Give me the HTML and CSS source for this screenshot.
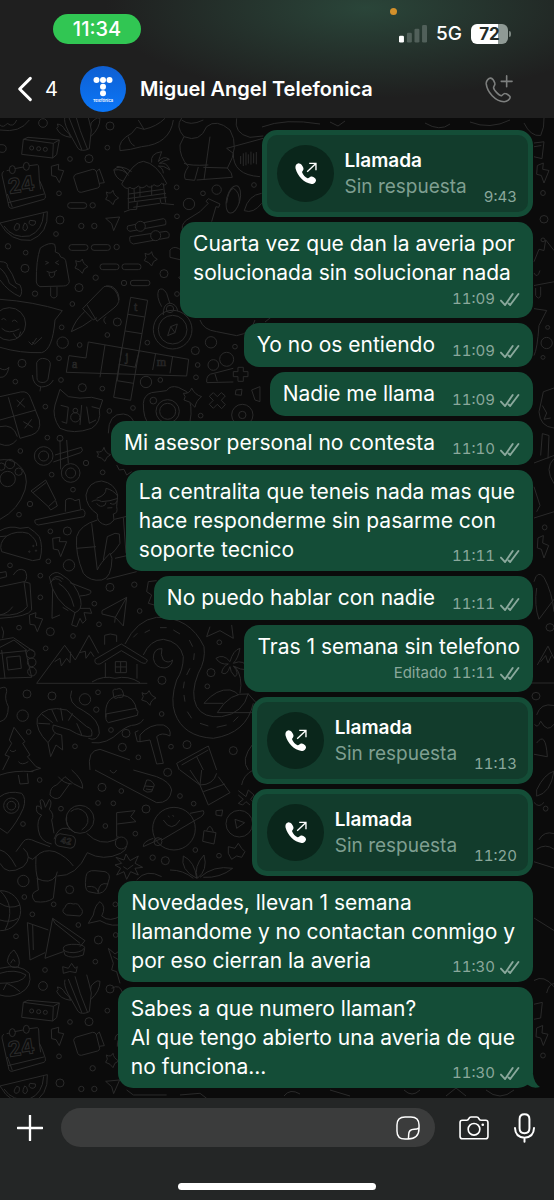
FILE: index.html
```html
<!DOCTYPE html>
<html lang="es">
<head>
<meta charset="utf-8">
<meta name="viewport" content="width=device-width, initial-scale=1">
<title>Miguel Angel Telefonica</title>
<link rel="stylesheet" href="styles.css">
</head>
<body>
<svg class="defs" width="0" height="0" aria-hidden="true">
  <symbol id="ticks" viewBox="739 523 63 45">
    <path d="M742 549L755 563L779 528M766 558L771 563L797 528" fill="none" stroke="currentColor" stroke-width="6" stroke-linecap="round" stroke-linejoin="round"/>
  </symbol>
  <symbol id="call-out" viewBox="116 124 80 80">
    <path fill="currentColor" d="M134 134C127 135 125 143 127 151C132 171 152 193 174 195C182 195 188 188 187 183C186 177 176 172 172 173C168 174 166 179 162 178C155 175 149 168 146 161C145 157 151 154 150 149C149 143 142 133 134 134Z"/>
    <path fill="none" stroke="currentColor" stroke-width="4" d="M161 159L186 135M167 134H187V154"/>
  </symbol>
</svg>

<div class="app">
  <header class="top">
    <div class="status">
      <span class="clock">11:34</span>
      <span class="dot"></span>
      <div class="indicators">
        <svg class="signal" viewBox="0 0 85 54" aria-hidden="true"><rect x="0" y="32" width="15" height="21" rx="4" fill="#fff"/><g fill="#51605a"><rect x="24" y="23" width="15" height="30" rx="4"/><rect x="47" y="11" width="15" height="42" rx="4"/><rect x="70" y="0" width="15" height="53" rx="4"/></g></svg>
        <span class="net">5G</span>
        <span class="battery">72</span>
      </div>
    </div>
    <nav class="bar">
      <button class="back" aria-label="Volver"><svg class="chev" viewBox="0 0 48 76" aria-hidden="true"><path d="M40 6L8 38L40 70" fill="none" stroke="#fff" stroke-width="9" stroke-linecap="round" stroke-linejoin="round"/></svg><span>4</span></button>
      <svg class="avatar" viewBox="0 0 46 46" role="img" aria-label="Telefónica">
        <defs><linearGradient id="av" x1="0" y1="0" x2="0" y2="1"><stop offset="0" stop-color="#0f5fd2"/><stop offset="1" stop-color="#0a76f8"/></linearGradient></defs>
        <circle cx="23" cy="23" r="23" fill="url(#av)"/>
        <g fill="#fff"><circle cx="16.500" cy="14" r="3"/><circle cx="23" cy="14" r="3"/><circle cx="29.500" cy="14" r="3"/><circle cx="23" cy="20.700" r="3"/><circle cx="23" cy="27.300" r="3"/></g>
        <text class="avatar-text" x="23" y="36" text-anchor="middle">Telefónica</text>
      </svg>
      <h1 class="name">Miguel Angel Telefonica</h1>
      <button class="call" aria-label="Llamar"><svg class="call-icon" viewBox="620 218 94 94" aria-hidden="true"><path fill="none" stroke="#7d7f7e" stroke-width="5" stroke-linejoin="round" stroke-linecap="round" d="M641 231C636 230 626 238 627 249C630 275 655 303 683 305C693 305 702 297 702 290C701 286 690 279 686 279C681 278 678 285 675 286C668 287 650 268 650 260C650 256 656 252 654 247C652 241 646 232 641 231ZM691 224V258M674 241H708"/></svg></button>
    </nav>
  </header>

  <main class="chat">
    <svg class="wallpaper" viewBox="0 0 554 980" preserveAspectRatio="xMinYMin slice" aria-hidden="true">
      <defs>
        <g id="calendar"><path d="M20 152L30 150M44 146L70 141M88 137L112 134Q116 135 116 141L118 180Q128 200 136 226Q138 236 132 238L36 265Q29 266 27 260L6 165Q5 156 12 154M22 222L37 262M24 248L132 222M118 180L122 208"/><ellipse cx="37" cy="149" rx="9" ry="12"/><ellipse cx="79" cy="139" rx="9" ry="12"/><text class="doodle-num" x="28" y="222" transform="rotate(-9 28 222)">24</text></g>
        <path id="bolt" d="M154 139L176 133L175 149L191 152L178 188L168 170L155 167Z"/>
        <g id="box"><path d="M70 58L160 70L178 60L84 52L70 58L65 103L158 114L160 70M158 114L170 104L178 60"/><circle cx="95" cy="84" r="6"/><circle cx="116" cy="86" r="6"/><circle cx="136" cy="88" r="6"/></g>
        <g id="camcorder"><path d="M230 162L278 148Q286 147 289 155L299 196Q299 202 293 204L244 217Q236 218 233 211L221 172Q221 165 230 162ZM288 156L298 147L313 188L298 190"/></g>
        <g id="melon"><path d="M0 309L142 275Q146 340 92 361Q30 366 0 309ZM12 318Q38 357 88 348Q128 332 131 280M50 310Q36 328 48 331Q60 331 58 313ZM74 309Q62 332 77 332Q87 325 80 313ZM90 301Q82 312 96 316Q109 316 106 303Z"/></g>
        <path id="spark" d="M319 216Q333 224 339 211Q341 226 356 234Q342 238 339 254Q332 242 317 238Q326 230 319 216Z"/>
        <path id="dart" d="M317 295L359 291L341 332L335 311Z"/>
        <g id="cactus"><path d="M195 -10Q190 5 205 34L234 85Q245 97 268 86L274 30Q270 10 260 -25M205 -12L246 90M225 -20Q238 30 263 89M170 25Q178 20 172 12M172 12Q188 14 195 30Q210 40 212 52Q180 48 170 25M272 50Q300 25 300 -5Q292 -10 282 0Q270 8 272 20"/></g>
      </defs>
      <g class="ink">
        <g transform="translate(0 2) scale(.3333)">
          <use href="#calendar"/><use href="#bolt"/><use href="#box"/><use href="#camcorder"/><use href="#melon"/><use href="#spark"/><use href="#dart"/><use href="#cactus"/>
          <path d="M0 30Q60 40 88 0M0 15Q10 25 22 10Q40 25 50 0M0 74Q22 72 18 90Q14 100 0 96"/>
          <path d="M360 92Q352 62 395 40L410 22L432 28L415 0M385 50Q390 72 404 78M360 92Q390 90 425 80Q510 72 520 0M432 28Q470 20 495 -5"/>
          <path d="M552 50Q525 20 545 -6M552 50Q600 70 620 20Q650 -5 690 30Q720 80 682 145M552 50L540 75Q538 110 565 140Q548 165 556 178L584 181L595 141M630 50L612 180M552 130Q570 138 625 135M610 142L682 144Q698 160 697 172L590 180M545 0Q570 20 610 0"/>
          <path d="M710 -5Q700 40 750 52L790 48M680 85L790 55M680 85L700 100Q698 165 780 170M722 108V132M730 100V138M738 97V136M745 103V131M753 95V134M761 100V130M769 96V133"/>
          <path d="M365 192Q400 125 430 124Q470 130 500 190Q495 200 485 190Q475 205 462 194Q450 208 440 196Q425 210 415 198Q400 212 390 202Q378 212 365 192ZM385 205V268M402 205L404 244M490 190L497 248M383 236L498 220M387 247L500 232M372 276Q390 266 410 268L412 247M480 235L483 250Q500 252 522 254M400 262L480 250M386 222L490 208M420 200V230M455 196V225M370 184Q345 175 342 150Q370 145 385 166Q365 135 350 140M340 150Q360 130 395 155M455 128Q450 100 485 95Q480 110 475 125Q490 105 508 118Q490 122 478 130Q500 125 510 150Q490 135 475 138Q490 145 490 160"/>
          <path d="M383 318L490 296Q500 298 497 314L390 334Q378 330 383 318ZM390 350L498 334Q512 338 506 353L400 372Q386 368 390 350Z"/><circle class="cut" cx="421" cy="319" r="15"/><circle class="cut" cx="467" cy="347" r="15"/>
          <rect x="203" y="248" width="57" height="17" rx="8"/><rect x="207" y="374" width="57" height="17" rx="8"/><rect x="274" y="374" width="57" height="17" rx="8"/><rect x="300" y="432" width="57" height="17" rx="8"/><rect x="366" y="432" width="57" height="17" rx="8"/><rect x="391" y="481" width="59" height="16" rx="8"/>
          <path d="M121 384Q148 365 164 373Q168 385 166 396Q180 398 182 411Q196 414 197 422L208 485Q205 498 190 498L120 500Q110 496 109 486Q108 420 121 384ZM152 502V528Q162 540 171 528V500M136 424L146 428L136 433M176 422L166 428L177 434M140 454Q156 462 171 451M147 457Q148 474 156 472Q165 470 164 455"/>
          <use href="#spark" transform="translate(-92 206)"/><use href="#spark" transform="translate(116 184)"/>
          <path d="M0 425Q25 425 22 440Q38 460 48 490L60 495Q70 515 60 530Q25 515 0 480M0 445Q20 460 28 490L50 505"/>
          <path d="M0 538Q100 545 187 572L165 600Q158 690 125 698Q60 700 0 682M86 665L96 675L110 654M96 667L104 672L126 652"/><circle cx="28" cy="612" r="49"/><path d="M5 600Q10 590 18 601M36 605Q44 595 52 607M5 625Q25 645 58 627M40 640Q55 670 62 635"/>
          <path d="M260 553L312 500Q340 490 354 520Q364 548 342 564L291 604ZM318 498Q350 500 357 540M260 553L248 566L280 600L291 593M254 575Q225 600 214 635Q250 620 275 600M318 590Q305 600 318 612"/>
          <path d="M392 532L443 541L392 841L341 832ZM384 583L434 591M375 633L426 641M265 666L566 718L560 768L199 757L207 707L258 714ZM315 675L300 772M365 683L352 780M418 692L405 742M467 700L458 750M518 709L510 760M350 782L400 790M356 733L407 742"/>
          <text class="doodle-letter" x="402" y="574">t</text><text class="doodle-letter" x="216" y="744">a</text><text class="doodle-letter" x="376" y="724">j</text><text class="doodle-letter" x="470" y="738">m</text>
          <circle cx="518" cy="629" r="58"/><circle cx="518" cy="629" r="43"/><circle cx="510" cy="567" r="11"/><path d="M490 585Q488 555 508 549Q530 552 533 573M485 560Q468 530 476 510Q488 500 500 520L510 552M503 647L512 620L532 612L525 638ZM512 620L525 638"/>
          <path d="M600 600Q610 630 650 635L710 647Q755 640 765 600"/>
          <circle cx="640" cy="735" r="16"/><circle cx="680" cy="718" r="21"/><path d="M620 786Q618 762 642 760L700 745M620 788L700 786M645 762L652 784M714 742H730V755H744V770H730V784H714V770H700V755H714Z"/>
          <path d="M110 728Q118 712 135 716Q152 720 151 735L144 778Q138 790 122 787Q110 784 111 772ZM97 765Q100 798 125 801Q150 800 160 780M122 801L120 814"/>
          <path d="M0 745Q15 755 27 742Q20 775 0 772M0 830L62 816Q85 812 92 835L118 900Q125 935 95 945L60 955M25 832L60 955M0 900L108 870M50 840L75 862M52 860L72 835M70 905L98 922M74 925L95 898M0 920Q40 910 52 950"/>
          <path d="M180 808L205 830Q240 838 275 832L308 840L298 870Q305 905 275 925Q220 945 180 925Q155 890 165 855ZM182 856L205 862L200 910L185 905M245 855L240 915M260 860L268 910L288 900M275 860L298 866"/><circle cx="226" cy="892" r="14"/><circle cx="226" cy="872" r="7"/>
          <path d="M430 850Q432 825 455 818L500 812Q510 795 535 802L560 815Q580 860 570 905M430 850Q430 900 448 910"/><circle cx="503" cy="874" r="35"/><circle cx="503" cy="874" r="24"/><circle cx="460" cy="842" r="10"/>
          <path class="cut" d="M550 820Q570 822 575 804Q585 825 605 830Q588 842 585 862Q570 842 552 840Q560 830 550 820Z"/>
          <path d="M640 818L652 830L664 818L676 828L664 841L676 854L665 866L652 853L640 865L628 853L640 841L628 829Z"/><circle cx="727" cy="885" r="32"/><circle cx="727" cy="885" r="11"/><path d="M325 940Q325 880 370 882Q400 885 405 920M708 810L726 808L724 826L706 824ZM755 810L780 800V845L765 840Z"/>
          <ellipse cx="700" cy="238" rx="20" ry="42" transform="rotate(14 700 238)"/><path d="M680 250Q685 210 700 205Q720 215 718 250M733 272Q745 225 785 220M733 272Q760 282 785 250M550 335Q540 315 560 300L600 275L625 250L618 244L625 236L660 252L656 262L648 260L635 305M510 390Q520 378 535 385L552 395M510 412L552 422M510 390V412M536 472L552 466M536 472L555 495"/>
          <g id="bubbles"><circle cx="129" cy="9" r="13"/><circle cx="330" cy="18" r="12"/><circle cx="322" cy="83" r="7"/><circle cx="210" cy="117" r="7"/><circle cx="267" cy="116" r="12"/><circle cx="177" cy="220" r="7"/><circle cx="278" cy="256" r="8"/><circle cx="180" cy="300" r="12"/><circle cx="244" cy="318" r="8"/><circle cx="283" cy="318" r="8"/></g>
          <circle cx="168" cy="342" r="7"/><circle cx="24" cy="379" r="8"/><circle cx="77" cy="398" r="7"/><circle cx="75" cy="445" r="12"/><circle cx="350" cy="381" r="8"/><circle cx="287" cy="473" r="8"/><circle cx="237" cy="503" r="12"/><circle cx="105" cy="521" r="8"/><circle cx="372" cy="489" r="8"/><circle cx="492" cy="461" r="12"/><circle cx="531" cy="522" r="7"/><circle cx="217" cy="552" r="7"/><circle cx="352" cy="606" r="12"/><circle cx="185" cy="622" r="7"/><circle cx="322" cy="645" r="7"/><circle cx="188" cy="668" r="17"/><circle cx="239" cy="675" r="7"/><circle cx="442" cy="668" r="7"/><circle cx="66" cy="730" r="12"/><circle cx="177" cy="715" r="7"/><circle cx="46" cy="785" r="7"/><circle cx="183" cy="780" r="7"/><circle cx="247" cy="803" r="12"/><circle cx="307" cy="806" r="7"/><circle cx="438" cy="786" r="17"/><circle cx="481" cy="780" r="7"/><circle cx="593" cy="735" r="7"/><circle cx="588" cy="772" r="7"/><circle cx="586" cy="692" r="12"/><circle cx="633" cy="667" r="17"/><circle cx="705" cy="680" r="7"/><circle cx="136" cy="860" r="7"/><circle cx="328" cy="873" r="7"/><circle cx="399" cy="864" r="7"/><circle cx="602" cy="887" r="7"/><circle cx="567" cy="252" r="17"/><circle cx="530" cy="202" r="7"/><circle cx="609" cy="220" r="7"/><circle cx="650" cy="209" r="14"/><circle cx="762" cy="195" r="7"/><circle cx="531" cy="289" r="7"/><circle cx="180" cy="955" r="9"/><circle cx="142" cy="953" r="7"/>
        </g>
        <g transform="translate(0 322) scale(.3333)">
          <circle cx="131" cy="48" r="28"/><circle cx="131" cy="48" r="15"/><circle cx="212" cy="99" r="28"/><circle cx="212" cy="99" r="15"/><path d="M165 45L244 22Q252 32 242 38L160 66M180 0L182 88M200 0L205 70M0 12Q30 25 50 0M290 35Q307 40 312 22Q316 40 332 44Q318 50 315 64Q305 52 292 50Q300 42 290 35ZM345 60L360 68L375 60M350 75L358 90L372 88L380 105L395 95"/>
          <path d="M0 60Q25 55 50 70Q90 100 75 150Q55 210 0 238"/><circle cx="23" cy="117" r="23"/><circle cx="30" cy="72" r="14"/><circle cx="56" cy="95" r="11"/><circle cx="4" cy="80" r="11"/>
          <path d="M93 153L137 120L167 180L145 200ZM99 158L138 128M145 200L152 210L172 198L167 182M105 240L248 208Q260 215 252 230L115 255Q102 252 105 240ZM196 215L197 180Q210 170 225 182L238 178L242 208"/>
          <path d="M0 272Q30 255 60 265L85 262Q105 275 118 290Q130 320 120 358L98 362L5 335Q-5 310 20 288Q50 270 85 280Q112 300 110 318M0 290L20 288"/><circle cx="88" cy="335" r="2"/><circle cx="100" cy="318" r="2"/><circle cx="108" cy="332" r="2"/>
          <path d="M292 222Q258 200 258 165Q265 125 305 123Q345 130 353 165L350 200Q355 220 340 222L342 240Q330 255 318 255Q295 250 292 232ZM275 185Q290 175 305 185L330 182L354 175M290 190Q300 205 315 195L318 187M330 190Q345 198 352 182M290 175Q320 165 318 145Q340 150 353 168M322 204L337 203M292 240Q240 255 230 290Q225 340 250 400Q270 425 305 420Q335 415 336 355L330 340Q300 370 292 390L275 250M310 360L322 290L345 280L358 282L360 310Q345 335 330 345M343 238L385 228L390 345L345 355M370 232L378 340M230 325L288 320M320 418L410 395M385 140Q375 160 385 200"/>
          <path d="M158 295L180 292L178 305L200 305L182 350L175 330L160 327ZM88 525L108 518L106 532L128 537L112 575L104 555L90 553Z"/>
          <path d="M148 410Q165 390 182 402Q230 430 242 480Q248 510 225 518Q160 485 148 410ZM150 430Q165 405 185 425M155 420Q170 400 190 418M210 428L272 452Q280 465 240 468M158 445L156 535L180 525M188 502L205 512M225 518L215 555L230 560L240 535L248 550L258 540L252 518L275 520L270 505L240 505M176 430Q210 450 222 500M306 512L380 472L370 558L346 532L306 522ZM380 472L346 532L344 548"/>
          <path d="M0 440L72 425L82 500Q60 530 0 525M72 425L90 430L95 510Q85 530 0 535M40 405Q55 380 75 392Q85 410 75 425M0 398L18 395L20 410L0 415M0 525Q25 520 38 500"/>
          <path d="M0 600L40 593L102 635M0 640L80 632M0 622L42 600L82 632M20 652L60 648L64 685L24 690ZM5 630L15 715M76 630L95 712M0 715L95 712M5 560Q15 575 8 595"/><circle cx="92" cy="642" r="13"/><circle cx="95" cy="667" r="13"/><circle cx="96" cy="695" r="13"/>
          <path d="M110 730L194 616L226 660L267 586L296 640M164 665L180 655L184 678L200 655L210 668L212 635M238 638L256 634L258 655L272 635L282 650M110 730H442M316 668V712M411 672V716M346 665H379V698H346ZM362 665V698M346 681H379M276 726Q310 705 345 715Q385 705 420 728M314 614V586Q330 578 350 586V606M285 658L364 612L442 660Q440 675 425 668L364 632L300 672Q282 675 285 658Z"/>
          <path d="M375 612Q410 540 470 532Q570 530 612 620Q618 660 595 700Q570 760 590 800Q610 835 665 830Q730 820 745 760M430 645Q450 600 490 598Q540 605 550 650Q550 690 530 720Q510 780 525 820Q550 890 640 895Q740 880 760 790"/>
          <path d="M400 592L412 580M434 578L450 570M480 563H500M520 570L540 582M568 600L578 620M583 640L581 660M570 685L560 705M553 725L550 745M552 765L555 785M562 815L575 835M600 850L625 858M650 862L680 855M700 845L715 830"/>
          <path d="M486 626Q460 625 460 655Q465 685 495 684Q515 680 518 660Q505 672 490 660Q480 645 486 626ZM426 758Q440 768 447 752Q452 768 468 774Q452 780 450 796Q442 782 425 780Q434 770 426 758Z"/>
          <path d="M318 832Q310 770 365 765Q405 770 410 812M318 822L408 805Q418 815 412 826L325 848Q315 842 318 822ZM340 762Q335 745 350 748Q365 740 370 760Q375 775 355 772Q340 782 340 762Z"/>
          <path d="M152 950L144 908L165 880M185 885L188 930L168 915L152 950M144 908Q105 870 112 835Q135 795 200 810L260 860Q280 865 275 888Q250 895 210 870L160 855Q150 880 185 885M115 850L150 852M125 822L158 848M155 808L172 845M182 804L188 842M218 820L205 842M230 850Q240 870 245 885M215 752Q200 790 250 812Q300 840 298 880Q290 905 265 895M275 908Q320 915 360 875Q385 855 405 855Q425 850 430 838"/>
          <path d="M8 990L28 950L15 945L35 910L28 900L42 862L75 905L68 910L90 945L82 950L108 980L122 985L90 995M0 745Q22 735 20 755Q12 775 25 800Q25 840 0 845M30 930Q38 940 48 930M55 965Q65 978 85 965"/>
          <path d="M420 885Q450 850 490 855Q515 865 510 888Q485 875 470 890L490 970L470 972L450 900L420 905ZM415 872L405 877L412 905L424 905M530 970L625 918L650 990M530 970L538 990M545 975L625 930M590 950L610 990M270 990Q260 930 300 928L390 960M745 990Q720 960 760 910"/>
          <path d="M620 590L630 560M620 590L660 572L700 595L695 555M648 655Q670 640 690 665Q700 630 720 625Q715 655 700 670Q735 655 745 690Q720 690 700 678Q720 700 705 710Q690 695 690 680Q680 710 665 698Q668 680 685 672Q660 675 648 655ZM705 680Q730 710 720 760M612 790Q650 745 690 750Q710 755 715 765M612 790H670M652 818Q690 755 745 762L770 790M652 818H770M445 425L470 422M445 425L440 455L455 465L445 490L480 500"/>
          <circle cx="61" cy="33" r="7"/><circle cx="155" cy="104" r="7"/><circle cx="258" cy="69" r="8"/><circle cx="308" cy="97" r="7"/><circle cx="219" cy="149" r="7"/><circle cx="90" cy="192" r="8"/><circle cx="57" cy="224" r="7"/><circle cx="151" cy="274" r="7"/><circle cx="202" cy="273" r="12"/><circle cx="145" cy="364" r="7"/><circle cx="207" cy="376" r="17"/><circle cx="30" cy="376" r="7"/><circle cx="121" cy="407" r="7"/><circle cx="330" cy="442" r="12"/><circle cx="403" cy="434" r="8"/><circle cx="121" cy="472" r="7"/><circle cx="283" cy="491" r="7"/><circle cx="419" cy="513" r="7"/><circle cx="57" cy="563" r="7"/><circle cx="151" cy="575" r="12"/><circle cx="297" cy="553" r="7"/><circle cx="219" cy="588" r="7"/><circle cx="137" cy="625" r="7"/><circle cx="486" cy="721" r="12"/><circle cx="294" cy="757" r="7"/><circle cx="81" cy="762" r="12"/><circle cx="156" cy="768" r="12"/><circle cx="255" cy="778" r="17"/><circle cx="289" cy="809" r="8"/><circle cx="68" cy="827" r="17"/><circle cx="485" cy="822" r="7"/><circle cx="86" cy="876" r="7"/><circle cx="333" cy="870" r="7"/><circle cx="378" cy="880" r="12"/><circle cx="367" cy="922" r="12"/><circle cx="225" cy="919" r="7"/><circle cx="415" cy="952" r="7"/><circle cx="513" cy="920" r="7"/><circle cx="561" cy="914" r="12"/><circle cx="700" cy="932" r="12"/><circle cx="658" cy="607" r="7"/><circle cx="633" cy="698" r="12"/><circle cx="622" cy="739" r="7"/>
        </g>
        <g transform="translate(0 652) scale(.3333)">
          <path d="M55 15L60 42L85 40L82 10M0 15Q40 0 100 5M215 0Q250 30 248 55Q220 45 195 20L170 45Q150 50 150 75Q165 92 180 82L210 40M175 20Q190 40 215 42M285 0L470 98Q510 100 515 60Q510 35 470 20L400 0M440 30Q455 28 463 45L455 65Q440 70 430 60ZM435 48L460 50M438 57L457 60M330 0Q340 18 350 0"/>
          <path d="M540 0L600 45Q640 45 650 10M570 0L600 45L605 0M600 45L625 105L690 68L655 20M610 65L675 42M715 62L738 80L745 60L762 75L752 88L765 102M715 75L730 88L715 100L728 105L738 95L750 105M725 45Q730 15 760 0"/>
          <path d="M0 80Q25 60 65 70Q80 85 70 115Q50 160 22 190L0 175"/><circle cx="34" cy="107" r="23"/><circle cx="34" cy="107" r="13"/>
          <circle cx="240" cy="148" r="42"/><path d="M212 125Q235 105 258 130Q275 160 245 180M200 140Q195 170 225 188M115 180Q110 150 125 135Q105 130 110 108Q120 105 125 118L120 92Q130 80 136 112L148 88Q158 95 148 118Q165 135 155 150L162 190M115 180Q120 215 155 222M162 208Q175 170 200 175L215 180M150 230L108 215Q80 200 70 215L48 245M70 235Q100 260 70 290Q20 320 0 280M85 262L98 268L108 260M0 240Q25 245 48 290M108 260Q130 235 165 245Q200 260 220 288M108 260Q105 310 115 330M110 325Q150 345 168 318L172 305M168 318L160 385Q140 400 105 395Q85 370 115 360L112 325M172 318Q230 320 262 248Q310 275 362 250Q380 240 380 228M260 190Q300 230 345 210L355 198M350 128V200M350 128L405 122L392 140L408 155L352 162"/><circle cx="364" cy="219" r="18"/><rect x="166" y="194" width="60" height="38" rx="15" transform="rotate(10 196 213)"/><text class="doodle-small" x="180" y="218" transform="rotate(12 180 218)">42</text>
          <circle cx="522" cy="176" r="64"/><path d="M485 205L430 230Q428 215 460 205M570 130L610 122Q618 135 590 148L485 210M490 150Q515 190 540 150M505 137L508 142M518 135L521 140"/><circle cx="474" cy="215" r="12"/>
          <circle cx="718" cy="161" r="40"/><path d="M705 148L734 158L710 175ZM648 122L668 120L665 138L648 135ZM612 182L648 188L642 222L608 214ZM620 182Q630 155 640 185M685 230L705 235L715 220L725 235L735 245L725 262L710 258L695 268L685 250Z"/>
          <path d="M348 262L372 270L378 252L390 272L415 258L405 280L428 292L405 295L415 315L392 305L380 328L372 305L350 315L362 295L345 285L365 280ZM370 290L382 298L400 285"/>
          <path d="M258 320Q260 300 285 302L315 305Q330 310 328 325L320 352Q310 372 290 370L265 365Q252 358 258 320ZM262 350Q290 345 295 368M295 368Q295 335 325 342M510 300Q550 300 580 325M550 258Q540 300 590 325Q585 275 550 258ZM612 255Q580 290 592 325Q625 300 612 255ZM600 322Q640 285 698 295Q660 325 610 322M410 330Q440 295 485 320"/>
          <circle cx="2" cy="422" r="60"/><path d="M0 362Q50 410 15 480M0 400Q30 420 60 405M0 450Q30 460 55 445"/>
          <path d="M200 435Q180 425 195 412Q200 395 220 402Q235 398 240 412Q255 425 240 438ZM265 460L280 435Q285 405 300 395Q320 410 305 438Q330 460 365 435M265 460L300 452Q340 475 370 460"/>
          <path d="M90 570L82 458L145 480M90 570L135 548M98 465L100 540M135 565L158 445L255 512L240 530M135 565L190 545M158 445L165 460L240 520M190 535Q190 525 215 523Q250 522 254 532Q250 545 222 548Q190 548 190 535ZM190 538L195 555Q215 568 250 555L254 535"/>
          <path d="M22 575Q25 550 42 540Q65 570 55 590Q35 600 22 575ZM32 580Q40 560 45 575M0 595Q60 580 88 610Q98 650 60 670Q30 685 0 675M0 610Q45 595 78 615Q70 640 0 640M10 660L20 640L40 650L60 665M325 535L345 552L362 540M325 535L340 580L335 600L350 605L360 640M340 560L365 575M335 655Q360 640 368 670M365 790Q345 790 345 810M370 795Q350 805 352 830"/>
          <use href="#calendar" transform="translate(0 639)"/><use href="#bolt" transform="translate(0 639)"/><use href="#box" transform="translate(0 639)"/><use href="#camcorder" transform="translate(0 639)"/><use href="#melon" transform="translate(0 639)"/><use href="#spark" transform="translate(0 639)"/><use href="#dart" transform="translate(0 639)"/><use href="#cactus" transform="translate(0 639)"/><use href="#bubbles" transform="translate(0 639)"/>
          <path d="M190 610L188 590L205 595L215 580L225 595L232 590L228 608Q210 600 190 610ZM380 960L400 975H500M540 975L600 970L620 985"/>
          <circle cx="306" cy="52" r="12"/><circle cx="364" cy="63" r="7"/><circle cx="119" cy="30" r="7"/><circle cx="503" cy="7" r="12"/><circle cx="294" cy="99" r="7"/><circle cx="340" cy="100" r="7"/><circle cx="183" cy="116" r="7"/><circle cx="438" cy="117" r="12"/><circle cx="540" cy="78" r="7"/><circle cx="581" cy="101" r="7"/><circle cx="316" cy="168" r="7"/><circle cx="69" cy="162" r="7"/><circle cx="406" cy="191" r="7"/><circle cx="586" cy="240" r="7"/><circle cx="458" cy="263" r="8"/><circle cx="496" cy="272" r="12"/><circle cx="657" cy="257" r="7"/><circle cx="70" cy="333" r="17"/><circle cx="209" cy="359" r="12"/><circle cx="73" cy="381" r="7"/><circle cx="161" cy="403" r="7"/><circle cx="97" cy="433" r="7"/><circle cx="346" cy="403" r="7"/><circle cx="235" cy="465" r="7"/><circle cx="347" cy="495" r="7"/><circle cx="295" cy="510" r="12"/><circle cx="48" cy="499" r="7"/><circle cx="286" cy="575" r="7"/><circle cx="135" cy="600" r="7"/>
        </g>
        <g class="edge" transform="translate(524 0) scale(.3333 .625)">
          <path d="M0 8Q20 30 50 28Q62 15 60 0M30 40L60 38L54 65L30 62M30 46L52 44M40 76L58 72L56 82L75 84L60 104L52 92L38 90ZM30 230L45 210L60 212L65 195L90 212M30 248Q40 258 48 244M90 262L30 268M35 272V284Q45 292 50 284V270M30 305L68 308L45 332Q40 370 30 380M90 432L58 438L45 470Q48 494 90 496M55 460L68 472L60 482L80 480M50 540L55 505L75 508L72 545M30 552L90 540M90 545Q60 560 90 585M30 640L90 630M30 590L48 620L38 630M42 672L58 668L56 680L74 684L60 704L52 690L40 688ZM30 742Q40 722 60 735Q85 760 90 790M38 752Q30 780 45 802L90 770M40 875L72 845L90 865M50 870L65 860L72 872L82 860M0 904H90M38 955Q50 935 90 940M32 970Q40 978 50 965Q70 985 90 970M38 1000Q65 980 70 1022L30 1018M38 1075Q60 1050 90 1045Q80 1080 38 1085ZM30 1095Q45 1105 60 1095M45 1155Q60 1140 90 1145M30 1190L90 1200M38 1170Q65 1160 90 1170M30 1280L90 1300M30 1380Q60 1370 90 1390M30 1418L55 1415L50 1440L30 1442M38 1456L56 1452L54 1464L72 1466L58 1484L50 1472L36 1470ZM68 1400Q75 1385 90 1385"/>
          <ellipse cx="57" cy="120" rx="7" ry="4"/><ellipse cx="60" cy="162" rx="12" ry="6"/><ellipse cx="57" cy="195" rx="6" ry="3"/><ellipse cx="68" cy="360" rx="17" ry="9"/><ellipse cx="71" cy="335" rx="6" ry="3"/><ellipse cx="57" cy="383" rx="6" ry="3"/><ellipse cx="62" cy="655" rx="7" ry="4"/><ellipse cx="36" cy="925" rx="12" ry="6"/><ellipse cx="65" cy="1105" rx="7" ry="4"/><ellipse cx="57" cy="1500" rx="7" ry="4"/><ellipse cx="78" cy="815" rx="12" ry="6"/>
        </g>
        <path d="M262 9Q285 0 320 6M330 4L338 8L345 3M425 5Q440 14 450 6M470 4Q490 12 510 2M265 204L275 196M284 978Q290 970 300 976M330 972L350 978M404 972Q412 980 420 972M446 978L456 970L466 978M486 972Q500 984 514 972"/>
      </g>
    </svg>

    <article class="bubble card"><span class="disc"><svg viewBox="0 0 27 27"><use href="#call-out"/></svg></span><div class="info"><strong>Llamada</strong><span>Sin respuesta</span></div><time class="meta">9:43</time></article>
    <article class="bubble stack"><p>Cuarta vez que dan la averia por<br>solucionada sin solucionar nada</p><span class="meta"><time>11:09</time><svg class="ticks"><use href="#ticks"/></svg></span></article>
    <article class="bubble line"><p>Yo no os entiendo</p><span class="meta"><time>11:09</time><svg class="ticks"><use href="#ticks"/></svg></span></article>
    <article class="bubble line"><p>Nadie me llama</p><span class="meta"><time>11:09</time><svg class="ticks"><use href="#ticks"/></svg></span></article>
    <article class="bubble line"><p>Mi asesor personal no contesta</p><span class="meta"><time>11:10</time><svg class="ticks"><use href="#ticks"/></svg></span></article>
    <article class="bubble block"><p>La centralita que teneis nada mas que<br>hace responderme sin pasarme con<br>soporte tecnico</p><span class="meta"><time>11:11</time><svg class="ticks"><use href="#ticks"/></svg></span></article>
    <article class="bubble line"><p>No puedo hablar con nadie</p><span class="meta"><time>11:11</time><svg class="ticks"><use href="#ticks"/></svg></span></article>
    <article class="bubble stack snug"><p>Tras 1 semana sin telefono</p><span class="meta"><span>Editado</span><time>11:11</time><svg class="ticks"><use href="#ticks"/></svg></span></article>
    <article class="bubble card"><span class="disc"><svg viewBox="0 0 27 27"><use href="#call-out"/></svg></span><div class="info"><strong>Llamada</strong><span>Sin respuesta</span></div><time class="meta">11:13</time></article>
    <article class="bubble card"><span class="disc"><svg viewBox="0 0 27 27"><use href="#call-out"/></svg></span><div class="info"><strong>Llamada</strong><span>Sin respuesta</span></div><time class="meta">11:20</time></article>
    <article class="bubble block"><p>Novedades, llevan 1 semana<br>llamandome y no contactan conmigo y<br>por eso cierran la averia</p><span class="meta"><time>11:30</time><svg class="ticks"><use href="#ticks"/></svg></span></article>
    <article class="bubble block last"><p>Sabes a que numero llaman?<br>Al que tengo abierto una averia de que<br>no funciona...</p><span class="meta"><time>11:30</time><svg class="ticks"><use href="#ticks"/></svg></span><svg class="tail" viewBox="0 0 17 14" aria-hidden="true"><path d="M0 0H10Q11 9 17 13Q10 15 5 11L0 9Z" fill="#144d37"/></svg></article>
  </main>

  <footer class="bottom">
    <form class="composer">
      <button type="button" class="tool" aria-label="Adjuntar"><svg class="i-plus" viewBox="0 0 78 78"><path d="M39 2V76M2 39H76" stroke="#fff" stroke-width="7" stroke-linecap="round"/></svg></button>
      <div class="field">
        <input type="text" aria-label="Mensaje">
        <button type="button" class="tool" aria-label="Pegatinas"><svg class="i-sticker" viewBox="0 0 74 74"><path fill="none" stroke="#fff" stroke-width="4.500" stroke-linejoin="round" d="M37 71H28Q3 71 3 46V28Q3 3 28 3H46Q71 3 71 28V38Q71 71 37 71ZM38 70Q39 66 39 58Q39 41 56 41Q66 41 70 37"/></svg></button>
      </div>
      <button type="button" class="tool" aria-label="Cámara"><svg class="i-camera" viewBox="0 0 92 74"><g fill="none" stroke="#fff" stroke-width="5" stroke-linejoin="round"><path d="M10 13H24Q28 13 30 8Q32 3 37 3H54Q59 3 61 8Q63 13 67 13H82Q89 13 89 20V63Q89 70 82 70H10Q3 70 3 63V20Q3 13 10 13Z"/><circle cx="46" cy="41" r="18"/></g><circle cx="73" cy="27" r="4" fill="#fff"/></svg></button>
      <button type="button" class="tool" aria-label="Grabar audio"><svg class="i-mic" viewBox="0 0 64 90"><path fill="none" stroke="#fff" stroke-width="6" stroke-linecap="round" d="M32 3Q47 3 47 18V46Q47 61 32 61Q17 61 17 46V18Q17 3 32 3ZM3 45Q4 73 32 75Q60 73 61 45M32 75V87"/></svg></button>
    </form>
    <div class="home"></div>
  </footer>
</div>
</body>
</html>
```

FILE: styles.css
```css
* { box-sizing: border-box; }
body {
  margin: 0;
  background: #242626;
  color: #fff;
  font-family: Inter, "Liberation Sans", sans-serif;
}
p, h1 { margin: 0; }
button { border: 0; padding: 0; background: none; color: inherit; font: inherit; }
svg { display: block; flex: none; }
.defs { position: absolute; }
.app { min-height: 100vh; display: flex; flex-direction: column; }

.top {
  height: 118px;
  background: radial-gradient(ellipse 260px 90px at 66% 8px, #2a4539, rgba(31, 31, 31, 0)) #1f1f1f;
}
.status {
  position: relative;
  height: 60px;
  padding: 14px 46px 0 53px;
  display: flex;
  justify-content: space-between;
  align-items: flex-start;
}
.clock {
  width: 88px;
  border-radius: 15px;
  background: #31c653;
  font-size: 20px;
  font-weight: 500;
  line-height: 30px;
  text-align: center;
}
.dot {
  position: absolute;
  top: 8px;
  left: 390px;
  width: 7px;
  height: 7px;
  border-radius: 50%;
  background: #d3902b;
}
.indicators { display: flex; align-items: center; gap: 9px; padding-top: 4px; }
.signal { width: 28px; height: 18px; }
.net { font-size: 19px; font-weight: 500; line-height: 32px; }
.battery {
  position: relative;
  width: 37px;
  border-radius: 6px;
  background: linear-gradient(90deg, #fff 72%, #8f9a95 72%);
  color: #222b27;
  font-size: 17px;
  font-weight: 700;
  line-height: 20px;
  text-align: center;
}
.battery::after {
  content: "";
  position: absolute;
  top: 7px;
  right: -3px;
  width: 2px;
  height: 6px;
  border-radius: 0 2px 2px 0;
  background: #7b8580;
}
.bar { display: flex; align-items: center; height: 58px; padding: 0 40px 0 17px; }
.back { display: flex; align-items: center; gap: 12px; width: 63px; font-size: 20px; }
.chev { width: 16px; height: 26px; }
.avatar { width: 46px; height: 46px; }
.avatar-text { font-size: 4px; font-weight: 600; fill: #fff; }
.name { flex: 1; margin-left: 14px; font-size: 20px; font-weight: 600; line-height: 28px; }
.call-icon { width: 30px; height: 30px; }

.chat {
  position: relative;
  flex: 1;
  display: flex;
  flex-direction: column;
  align-items: flex-end;
  gap: 5px;
  padding: 12px 21px 9px;
  background: #0b0b0b;
  overflow: hidden;
}
.wallpaper { position: absolute; inset: 0; width: 100%; height: 100%; }
.ink { fill: none; stroke: #2a2a2a; stroke-width: 3; }
.ink > path { stroke-width: 1; }
.edge * { stroke-width: 1; vector-effect: non-scaling-stroke; }
.cut { fill: #0b0b0b; }
.doodle-num { font: 700 62px Inter, sans-serif; }
.doodle-letter { font: 36px "Liberation Serif", serif; stroke-width: 2; }
.doodle-small { font: 600 26px Inter, sans-serif; stroke-width: 2; }

.bubble {
  position: relative;
  max-width: 100%;
  padding: 7px 13px;
  border-radius: 15px;
  background: #144d37;
  font-size: 21px;
  line-height: 29px;
}
.line { display: flex; gap: 17px; padding-bottom: 8px; }
.line .meta { align-self: flex-end; }
.stack { display: flex; flex-direction: column; }
.stack p, .block p { padding-right: 5px; }
.snug p { padding-right: 0; }
.block { display: grid; }
.block p, .block .meta { grid-area: 1 / 1; }
.stack .meta { align-self: flex-end; line-height: 24px; }
.block .meta { align-self: end; justify-self: end; }
.meta {
  display: flex;
  align-items: center;
  gap: 5px;
  color: #8aa89c;
  font-size: 15px;
  font-variant-numeric: tabular-nums;
  line-height: 16px;
}
.ticks { width: 20px; height: 15px; }
.card {
  display: flex;
  align-items: center;
  height: 87px;
  padding: 0 11px 0 10px;
  border: 5px solid #144d37;
  background: #123c2c;
}
.disc {
  display: grid;
  place-items: center;
  width: 57px;
  height: 57px;
  border-radius: 50%;
  background: #0a261b;
}
.disc svg { width: 27px; height: 27px; }
.info { display: flex; flex-direction: column; margin: 0 17px 0 11px; font-size: 19px; line-height: 26px; }
.info strong { font-weight: 600; }
.info span { color: #7f9f91; }
.card .meta { align-self: flex-end; padding-bottom: 7px; }
.tail { position: absolute; right: -7px; bottom: 0; width: 17px; height: 14px; }

.bottom { background: #242626; }
.composer { display: flex; align-items: center; padding: 10px 22px 0 17px; }
.tool { display: grid; place-items: center; flex: none; }
.field {
  flex: 1;
  display: flex;
  align-items: center;
  height: 39px;
  margin: 0 24px 0 18px;
  padding: 0 15px 0 18px;
  border-radius: 20px;
  background: #3b3c3c;
}
.field input {
  flex: 1;
  min-width: 0;
  border: 0;
  outline: 0;
  background: none;
  color: #fff;
  font: 20px Inter, sans-serif;
}
.i-plus { width: 26px; height: 26px; }
.i-sticker { width: 24px; height: 24px; }
.i-camera { width: 30px; height: 24px; margin-right: 25px; }
.i-mic { width: 21px; height: 30px; }
.home {
  width: 198px;
  height: 7px;
  margin: 36px auto 10px;
  border-radius: 4px;
  background: #fff;
}
```
